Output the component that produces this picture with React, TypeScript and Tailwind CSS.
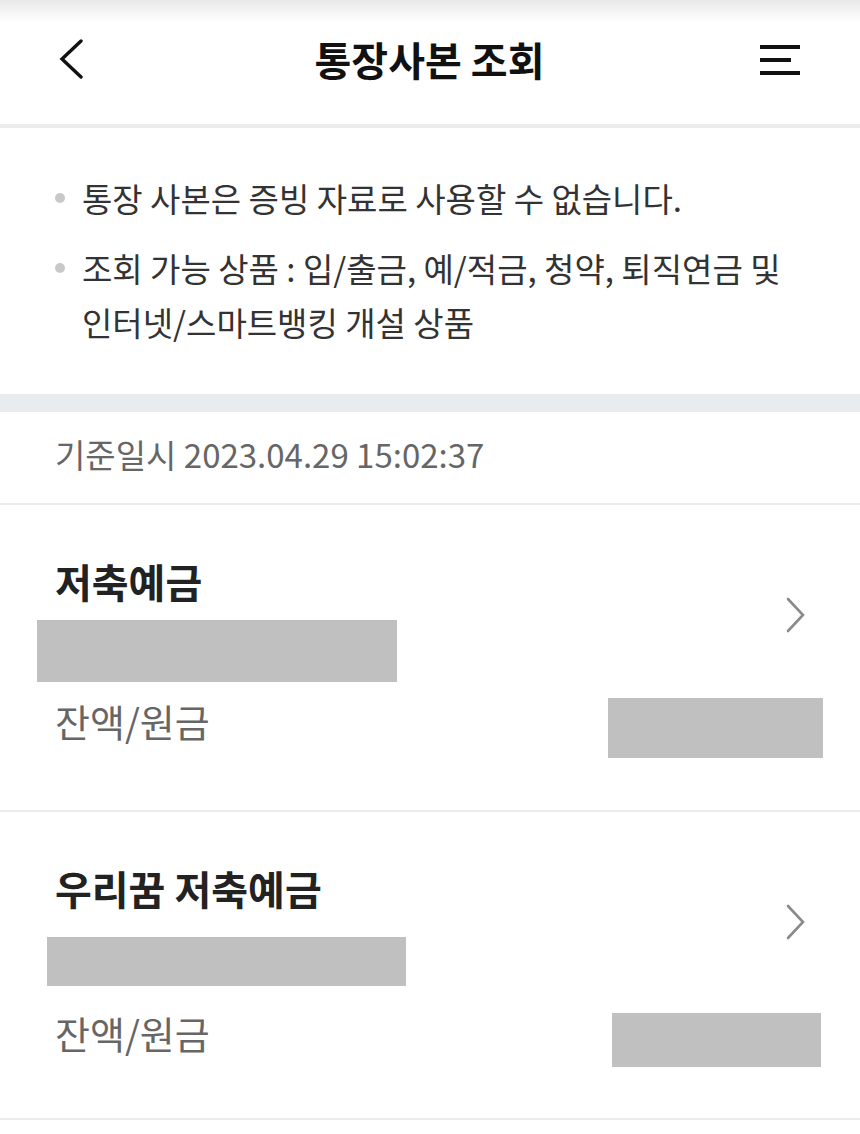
const FONT = "font-['Noto_Sans_CJK_KR','Noto_Sans',sans-serif]";

type Account = {
  name: string;
  idBox: { mt: string; h: string; w: string; ml: string };
  row: { mt: string; h: string; w: string; mr: string };
  pb: string;
};

const accounts: Account[] = [
  {
    name: "저축예금",
    idBox: { mt: "mt-[15px]", h: "h-[62px]", w: "w-[360px]", ml: "-ml-[18px]" },
    row: { mt: "mt-[16px]", h: "h-[60px]", w: "w-[215px]", mr: "mr-[37px]" },
    pb: "pb-[52px]",
  },
  {
    name: "우리꿈 저축예금",
    idBox: { mt: "mt-[25px]", h: "h-[49px]", w: "w-[359px]", ml: "-ml-[8px]" },
    row: { mt: "mt-[27px]", h: "h-[54px]", w: "w-[209px]", mr: "mr-[39px]" },
    pb: "pb-[51px]",
  },
];

function BackIcon() {
  return (
    <svg width="28" height="40" viewBox="0 0 28 40" fill="none">
      <path d="M23 2 L4 20 L23 38" stroke="#111" strokeWidth="3.4" strokeLinecap="round" strokeLinejoin="miter" />
    </svg>
  );
}

function MenuIcon() {
  return (
    <svg width="42" height="32" viewBox="0 0 42 32" fill="none">
      <rect x="1" y="2" width="40" height="4" fill="#111" />
      <rect x="1" y="15" width="31" height="4" fill="#111" />
      <rect x="1" y="28" width="40" height="4" fill="#111" />
    </svg>
  );
}

function Chevron() {
  return (
    <svg width="24" height="36" viewBox="0 0 24 36" fill="none">
      <path d="M4 2 L19 18 L4 34" stroke="#8a8a8a" strokeWidth="2.6" strokeLinecap="round" />
    </svg>
  );
}

function AccountItem({ a }: { a: Account }) {
  return (
    <div className={`border-b-2 border-[#ececec] pl-[55px] pt-[54px] ${a.pb}`}>
      <div className="flex items-start justify-between">
        <div className="flex flex-col">
          <div className="h-[46px] text-[40px] leading-[44px] font-bold text-[#222]">
            {a.name}
          </div>
          <div className={`${a.idBox.mt} ${a.idBox.h} ${a.idBox.w} ${a.idBox.ml} bg-[#c0c0c0]`} />
        </div>
        <div className="mt-[38px] mr-[52px]">
          <Chevron />
        </div>
      </div>
      <div className={`flex items-center justify-between ${a.row.mt} ${a.row.h}`}>
        <span className="pb-[14px] text-[38px] leading-[44px] text-[#666]">잔액/원금</span>
        <div className={`h-full ${a.row.w} ${a.row.mr} bg-[#c0c0c0]`} />
      </div>
    </div>
  );
}

export default function App() {
  return (
    <div className={`w-[860px] min-h-[1134px] bg-white ${FONT}`}>
      {/* header */}
      <header className="grid h-[128px] grid-cols-[1fr_auto_1fr] items-center border-b-4 border-[#ececec] bg-[linear-gradient(to_bottom,#e9e9e9_0px,#ffffff_22px)] pl-[58px] pr-[59px] pb-[6px]">
        <div className="justify-self-start">
          <BackIcon />
        </div>
        <h1 className="text-[40px] font-bold text-[#111]">통장사본 조회</h1>
        <div className="justify-self-end">
          <MenuIcon />
        </div>
      </header>

      {/* notice */}
      <section className="flex flex-col gap-[16px] pt-[43px] pb-[45px] pl-[55px] pr-[40px] text-[33px] leading-[54px] text-[#333] break-keep">
        <div className="flex">
          <span className="mt-[22px] mr-[17px] h-[10px] w-[10px] shrink-0 rounded-full bg-[#c8c8c8]" />
          <p>통장 사본은 증빙 자료로 사용할 수 없습니다.</p>
        </div>
        <div className="flex">
          <span className="mt-[22px] mr-[17px] h-[10px] w-[10px] shrink-0 rounded-full bg-[#c8c8c8]" />
          <p>조회 가능 상품 : 입/출금, 예/적금, 청약, 퇴직연금 및 인터넷/스마트뱅킹 개설 상품</p>
        </div>
      </section>

      <div className="h-[18px] bg-[#e9ecef]" />

      {/* base date */}
      <div className="flex h-[93px] items-center border-b-2 border-[#ececec] pb-[6px] pl-[55px] text-[33px] text-[#666]">
        기준일시 2023.04.29 15:02:37
      </div>

      {accounts.map((a) => (
        <AccountItem key={a.name} a={a} />
      ))}
    </div>
  );
}
